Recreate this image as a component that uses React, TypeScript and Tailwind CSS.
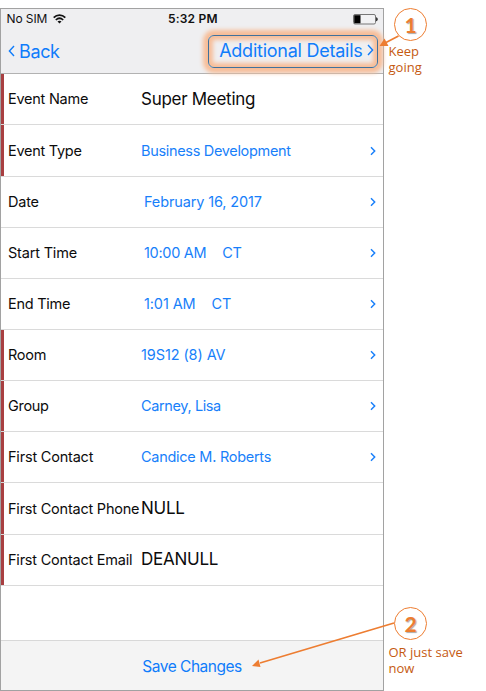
import React from "react";

type Row = {
  label: string;
  value: string;
  zone?: string;
  required?: boolean;
  editable?: boolean;
  indent?: boolean;
  labelTracking: string;
  valueTracking: string;
};

const rows: Row[] = [
  { label: "Event Name", value: "Super Meeting", required: true, editable: true, labelTracking: "tracking-[-0.25px]", valueTracking: "tracking-[-0.28px]" },
  { label: "Event Type", value: "Business Development", required: true, labelTracking: "tracking-[-0.28px]", valueTracking: "tracking-[-0.32px]" },
  { label: "Date", value: "February 16, 2017", indent: true, labelTracking: "tracking-[-0.2px]", valueTracking: "tracking-[-0.14px]" },
  { label: "Start Time", value: "10:00 AM", zone: "CT", indent: true, labelTracking: "tracking-[-0.18px]", valueTracking: "tracking-[-0.3px]" },
  { label: "End Time", value: "1:01 AM", zone: "CT", indent: true, labelTracking: "tracking-[-0.25px]", valueTracking: "tracking-[-0.1px]" },
  { label: "Room", value: "19S12 (8) AV", required: true, labelTracking: "tracking-[-0.25px]", valueTracking: "tracking-[-0.1px]" },
  { label: "Group", value: "Carney, Lisa", required: true, labelTracking: "tracking-[-0.3px]", valueTracking: "tracking-[-0.38px]" },
  { label: "First Contact", value: "Candice M. Roberts", required: true, labelTracking: "tracking-[-0.2px]", valueTracking: "tracking-[-0.27px]" },
  { label: "First Contact Phone", value: "NULL", required: true, editable: true, labelTracking: "tracking-[-0.22px]", valueTracking: "tracking-[-0.28px]" },
  { label: "First Contact Email", value: "DEANULL", required: true, editable: true, labelTracking: "tracking-[-0.22px]", valueTracking: "tracking-[-0.25px]" },
];

function StatusBar() {
  return (
    <div className="flex h-5 items-center pl-[5.5px] pr-[5px] text-[12px] leading-5 text-[#111]">
      <div className="flex w-[161.5px] items-center gap-[6px]">
        <span className="tracking-[-0.1px]">No SIM</span>
        <svg width="13" height="10" viewBox="0 0 13 10" fill="none" stroke="#111" strokeWidth="1.7">
          <path d="M.7 3.7C4 .3 9 .3 12.3 3.7M2.8 6C5 3.9 8 3.9 10.2 6" />
          <path d="M6.5 9.6 4.5 7.6C5.6 6.6 7.4 6.6 8.5 7.6Z" fill="#111" stroke="none" />
        </svg>
      </div>
      <span className="font-semibold tracking-[0.2px]">5:32 PM</span>
      <svg className="ml-auto" width="25" height="11" viewBox="0 0 25 11">
        <rect x=".5" y=".5" width="22" height="9.5" rx="1.5" fill="#f2f2f4" stroke="#777" />
        <path d="M1.2 1.2H7.5V9.3H1.2Z" fill="#000" />
        <path d="M23.2 3.2C25.2 4 25.2 6.5 23.2 7.3Z" fill="#111" />
      </svg>
    </div>
  );
}

function Chevron() {
  return (
    <svg width="7" height="10" viewBox="0 0 7 10" fill="none" stroke="#187ffa" strokeWidth="1.45">
      <path d="M1 1.3 4.7 5 1 8.7" />
    </svg>
  );
}

function Field({ row }: { row: Row }) {
  return (
    <li className="flex h-[51.15px] items-center border-b border-[#dadada] pr-[6px]">
      <span className={`h-full w-[3px] shrink-0 ${row.required ? "bg-[#a83f41]" : ""}`} />
      <span className={`w-[132.5px] shrink-0 whitespace-nowrap pl-[4px] text-[14.5px] text-[#0c0c0c] ${row.labelTracking}`}>
        {row.label}
      </span>
      <span
        className={`whitespace-nowrap ${row.editable ? "pt-px text-[17px] text-[#0c0c0c]" : "text-[14.5px] text-[#187ffa]"} ${row.indent ? "pl-[7.5px]" : "pl-[4.5px]"} ${row.valueTracking}`}
      >
        {row.value}
      </span>
      {row.zone && <span className="pl-[16px] text-[14.5px] tracking-[-0.3px] text-[#187ffa]">{row.zone}</span>}
      {!row.editable && (
        <span className="ml-auto">
          <Chevron />
        </span>
      )}
    </li>
  );
}

function Callout({ number, lines, gap }: { number: string; lines: string[]; gap: string }) {
  return (
    <div className={`flex flex-col ${gap}`}>
      <div className="ml-[6px] flex size-[33px] items-center justify-center rounded-full border border-[#ed7d31] bg-white font-[Lato,sans-serif] text-[21px] font-bold leading-none text-[#ed7d31] [text-shadow:1px_1px_1px_#aaa]">
        {number}
      </div>
      <div className="flex flex-col pl-[0.5px] font-['Open_Sans',sans-serif] text-[13px] leading-4 text-[#c55a11]">
        {lines.map((line) => (
          <span key={line} className="whitespace-nowrap">
            {line}
          </span>
        ))}
      </div>
    </div>
  );
}

export default function App() {
  return (
    <div className="relative flex h-[691px] w-[486px] overflow-hidden bg-white pt-2 font-['Inter',sans-serif]">
      <main className="flex h-[683px] w-[384px] shrink-0 flex-col border border-[#a2a2a2] bg-white">
        <header className="h-[65px] shrink-0 border-b border-[#b2b2b2] bg-[#efeff1]">
          <StatusBar />
          <div className="flex h-[44px] items-center justify-between pl-[7px] pr-[5px] text-[18px] text-[#0f7cfb]">
            <span className="flex items-center gap-[4px]">
              <svg width="7" height="12" viewBox="0 0 7 12" fill="none" stroke="currentColor" strokeWidth="1.4">
                <path d="M6 1 1.4 6 6 11" />
              </svg>
              <span className="tracking-[-0.35px]">Back</span>
            </span>
            <span className="flex h-[33px] w-[170px] items-center justify-end gap-[4px] rounded-[6px] border border-[#41719c] pb-[2px] pr-[3.5px] shadow-[0_0_4px_5px_#f7bd97,inset_0_0_4px_4px_#f7bd97]">
              <span className="tracking-[-0.25px]">Additional Details</span>
              <svg width="7" height="12" viewBox="0 0 7 12" fill="none" stroke="currentColor" strokeWidth="1.4">
                <path d="M1 1 5.6 6 1 11" />
              </svg>
            </span>
          </div>
        </header>
        <ul className="flex-1 pt-[0.3px]">
          {rows.map((row) => (
            <Field key={row.label} row={row} />
          ))}
        </ul>
        <footer className="flex h-[50px] shrink-0 items-center justify-center border-t border-[#d8d8d8] bg-[#f4f4f4] pt-[2px] text-[15.5px] tracking-[-0.5px] text-[#0f7cfb]">
          Save Changes
        </footer>
      </main>
      <aside className="flex flex-1 flex-col justify-between pb-[15px] pl-[4px]">
        <Callout number="1" lines={["Keep", "going"]} gap="gap-[2px]" />
        <Callout number="2" lines={["OR just save", "now"]} gap="gap-[4px]" />
      </aside>
      <svg className="absolute left-0 top-0" width="486" height="691" fill="none">
        <path d="M398.5 36 386 42.5M394 623 260 663" stroke="#ed7d31" strokeWidth="1.7" />
        <path d="M379.5 46 384.5 38.5 388.5 46ZM252 666 258.5 659.5 260.5 667Z" fill="#ed7d31" />
      </svg>
    </div>
  );
}
